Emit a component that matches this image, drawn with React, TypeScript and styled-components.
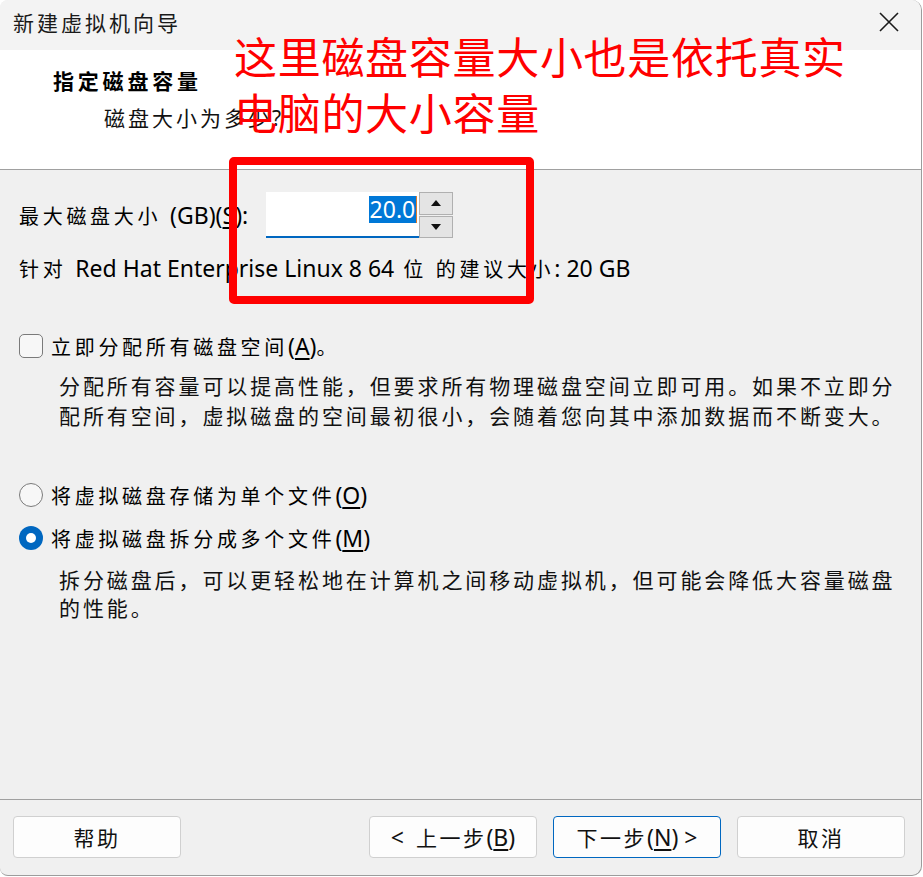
import React from "react";
import styled, { createGlobalStyle } from "styled-components";

const Global = createGlobalStyle`
  html, body { margin: 0; padding: 0; background: #ffffff; }
  body { font-family: "Noto Sans", "Noto Sans CJK SC", sans-serif; }
`;

const CJK = `"Noto Sans", "Noto Sans CJK SC", sans-serif`;

const Window = styled.div`
  position: relative;
  box-sizing: border-box;
  width: 922px;
  height: 876px;
  background: #f0f0f0;
  border-right: 1px solid #9c9c9c;
  border-bottom: 1px solid #9c9c9c;
  border-radius: 8px 10px 10px 8px;
  overflow: hidden;
  display: flex;
  flex-direction: column;
  color: #000;
`;

const TitleBar = styled.div`
  height: 50px;
  flex: none;
  background: #f3f3f3;
  display: flex;
  align-items: center;
  justify-content: space-between;
  padding: 0 22px 6px 13px;
  box-sizing: border-box;
`;

const TitleText = styled.div`
  font-family: ${CJK};
  font-size: 21px;
  letter-spacing: 3px;
  color: #1a1a1a;
`;

const Header = styled.div`
  height: 120px;
  flex: none;
  box-sizing: border-box;
  background: #ffffff;
  border-bottom: 1px solid #a0a0a0;
  padding: 16px 0 0 53px;
  display: flex;
  flex-direction: column;
`;

const HeaderTitle = styled.div`
  font-family: ${CJK};
  font-weight: 700;
  font-size: 21px;
  letter-spacing: 3.8px;
  line-height: 30px;
`;

const HeaderSub = styled.div`
  font-family: ${CJK};
  font-size: 21px;
  letter-spacing: 3px;
  line-height: 30px;
  margin: 7px 0 0 51px;
  color: #111;
`;

const Body = styled.div`
  flex: 1;
  display: flex;
  flex-direction: column;
  padding-left: 19px;
`;

const Text = styled.span`
  font-family: ${CJK};
  font-size: 20px;
  letter-spacing: 3.7px;
`;

const Latin = styled.span`
  font-family: "Noto Sans", sans-serif;
  font-size: 23px;
  letter-spacing: 0;
`;

const U = styled.span`
  text-decoration: underline;
  text-decoration-thickness: 1.5px;
  text-underline-offset: 3px;
`;

const SizeRow = styled.div`
  margin-top: 22px;
  height: 46px;
  display: flex;
  align-items: center;
`;

const Input = styled.div`
  margin-left: 18px;
  width: 153px;
  height: 46px;
  box-sizing: border-box;
  background: #fff;
  border-bottom: 2px solid #0067c0;
  display: flex;
  justify-content: flex-end;
  align-items: flex-start;
  padding: 4px 2px 0 0;
`;

const Selected = styled.span`
  font-family: "Noto Sans", sans-serif;
  font-size: 23px;
  line-height: 27px;
  height: 27px;
  background: #0078d7;
  color: #fff;
  padding: 0 1px;
  border-right: 1px solid #e07b2a;
`;

const Spinner = styled.div`
  width: 34px;
  height: 46px;
  display: flex;
  flex-direction: column;
  gap: 1px;
  align-self: center;
`;

const SpinBtn = styled.div`
  flex: 1;
  box-sizing: border-box;
  background: #e4e4e4;
  border: 1px solid #b0b0b0;
  display: flex;
  align-items: center;
  justify-content: center;
`;

const Arrow = styled.div<{ $up?: boolean }>`
  width: 0;
  height: 0;
  border-left: 5px solid transparent;
  border-right: 5px solid transparent;
  ${(p) => (p.$up ? "border-bottom: 6px solid #111;" : "border-top: 6px solid #111;")}
`;

const Line = styled.div<{ $mt: number }>`
  margin-top: ${(p) => p.$mt}px;
  height: 30px;
  display: flex;
  align-items: center;
`;

const OptionRow = styled.div<{ $mt: number }>`
  margin-top: ${(p) => p.$mt}px;
  height: 30px;
  display: flex;
  align-items: center;
  gap: 8px;
`;

const Checkbox = styled.div`
  width: 24px;
  height: 24px;
  box-sizing: border-box;
  border: 1.5px solid #7a7a7a;
  border-radius: 5px;
  background: #f7f7f7;
`;

const Radio = styled.div<{ $on?: boolean }>`
  width: 24px;
  height: 24px;
  box-sizing: border-box;
  border-radius: 50%;
  display: flex;
  align-items: center;
  justify-content: center;
  ${(p) =>
    p.$on
      ? "background: #0067c0; border: none;"
      : "background: #f7f7f7; border: 1.5px solid #7a7a7a;"}
`;

const Dot = styled.div`
  width: 10px;
  height: 10px;
  border-radius: 50%;
  background: #fff;
`;

const Desc = styled.div<{ $mt: number; $lh: number }>`
  margin: ${(p) => p.$mt}px 0 0 40px;
  font-family: ${CJK};
  font-size: 21px;
  letter-spacing: 2.9px;
  line-height: ${(p) => p.$lh}px;
  width: 850px;
  color: #111;
`;

const Footer = styled.div`
  flex: none;
  height: 76px;
  box-sizing: border-box;
  border-top: 1px solid #a0a0a0;
  padding: 16px 16px 0 13px;
  display: flex;
  gap: 16px;
`;

const Button = styled.div<{ $primary?: boolean; $push?: boolean }>`
  width: 168px;
  height: 42px;
  box-sizing: border-box;
  background: #fdfdfd;
  border: 1px solid ${(p) => (p.$primary ? "#0067c0" : "#d0d0d0")};
  border-radius: 4px;
  display: flex;
  align-items: center;
  justify-content: center;
  font-family: ${CJK};
  font-size: 21px;
  letter-spacing: 2.5px;
  color: #111;
  ${(p) => (p.$push ? "margin-left: auto;" : "")}
`;

const Annotation = styled.div`
  position: absolute;
  left: 234px;
  top: 27px;
  font-family: "Noto Sans CJK SC", sans-serif;
  font-size: 43px;
  letter-spacing: 0.7px;
  line-height: 56px;
  color: #ff0000;
`;

const RedBox = styled.div`
  position: absolute;
  left: 229px;
  top: 157px;
  width: 305px;
  height: 147px;
  box-sizing: border-box;
  border: 8px solid #ff0000;
  border-radius: 5px;
`;

const CloseIcon = () => (
  <svg width="20" height="20" viewBox="0 0 20 20">
    <path d="M1 1 L19 19 M19 1 L1 19" stroke="#1a1a1a" strokeWidth="1.6" />
  </svg>
);

export default function App() {
  return (
    <>
      <Global />
      <Window>
        <TitleBar>
          <TitleText>新建虚拟机向导</TitleText>
          <CloseIcon />
        </TitleBar>
        <Header>
          <HeaderTitle>指定磁盘容量</HeaderTitle>
          <HeaderSub>磁盘大小为多少?</HeaderSub>
        </Header>
        <Body>
          <SizeRow>
            <Text>
              最大磁盘大小 <Latin>(GB)(<U>S</U>):</Latin>
            </Text>
            <Input>
              <Selected>20.0</Selected>
            </Input>
            <Spinner>
              <SpinBtn>
                <Arrow $up />
              </SpinBtn>
              <SpinBtn>
                <Arrow />
              </SpinBtn>
            </Spinner>
          </SizeRow>
          <Line $mt={15}>
            <Text>
              针对 <Latin>Red Hat Enterprise Linux 8 64</Latin> 位 的建议大小<Latin>: 20 GB</Latin>
            </Text>
          </Line>
          <OptionRow $mt={48}>
            <Checkbox />
            <Text>
              立即分配所有磁盘空间<Latin>(<U>A</U>)</Latin>。
            </Text>
          </OptionRow>
          <Desc $mt={10} $lh={30}>
            分配所有容量可以提高性能，但要求所有物理磁盘空间立即可用。如果不立即分配所有空间，虚拟磁盘的空间最初很小，会随着您向其中添加数据而不断变大。
          </Desc>
          <OptionRow $mt={49}>
            <Radio />
            <Text>
              将虚拟磁盘存储为单个文件<Latin>(<U>O</U>)</Latin>
            </Text>
          </OptionRow>
          <OptionRow $mt={13}>
            <Radio $on>
              <Dot />
            </Radio>
            <Text>
              将虚拟磁盘拆分成多个文件<Latin>(<U>M</U>)</Latin>
            </Text>
          </OptionRow>
          <Desc $mt={13} $lh={28}>
            拆分磁盘后，可以更轻松地在计算机之间移动虚拟机，但可能会降低大容量磁盘的性能。
          </Desc>
        </Body>
        <Footer>
          <Button>帮助</Button>
          <Button $push>
            <Latin>&lt;&nbsp;&nbsp;</Latin>上一步<Latin>(<U>B</U>)</Latin>
          </Button>
          <Button $primary>
            下一步<Latin>(<U>N</U>)&nbsp;&gt;</Latin>
          </Button>
          <Button>取消</Button>
        </Footer>
        <Annotation>
          这里磁盘容量大小也是依托真实
          <br />
          电脑的大小容量
        </Annotation>
        <RedBox />
      </Window>
    </>
  );
}
